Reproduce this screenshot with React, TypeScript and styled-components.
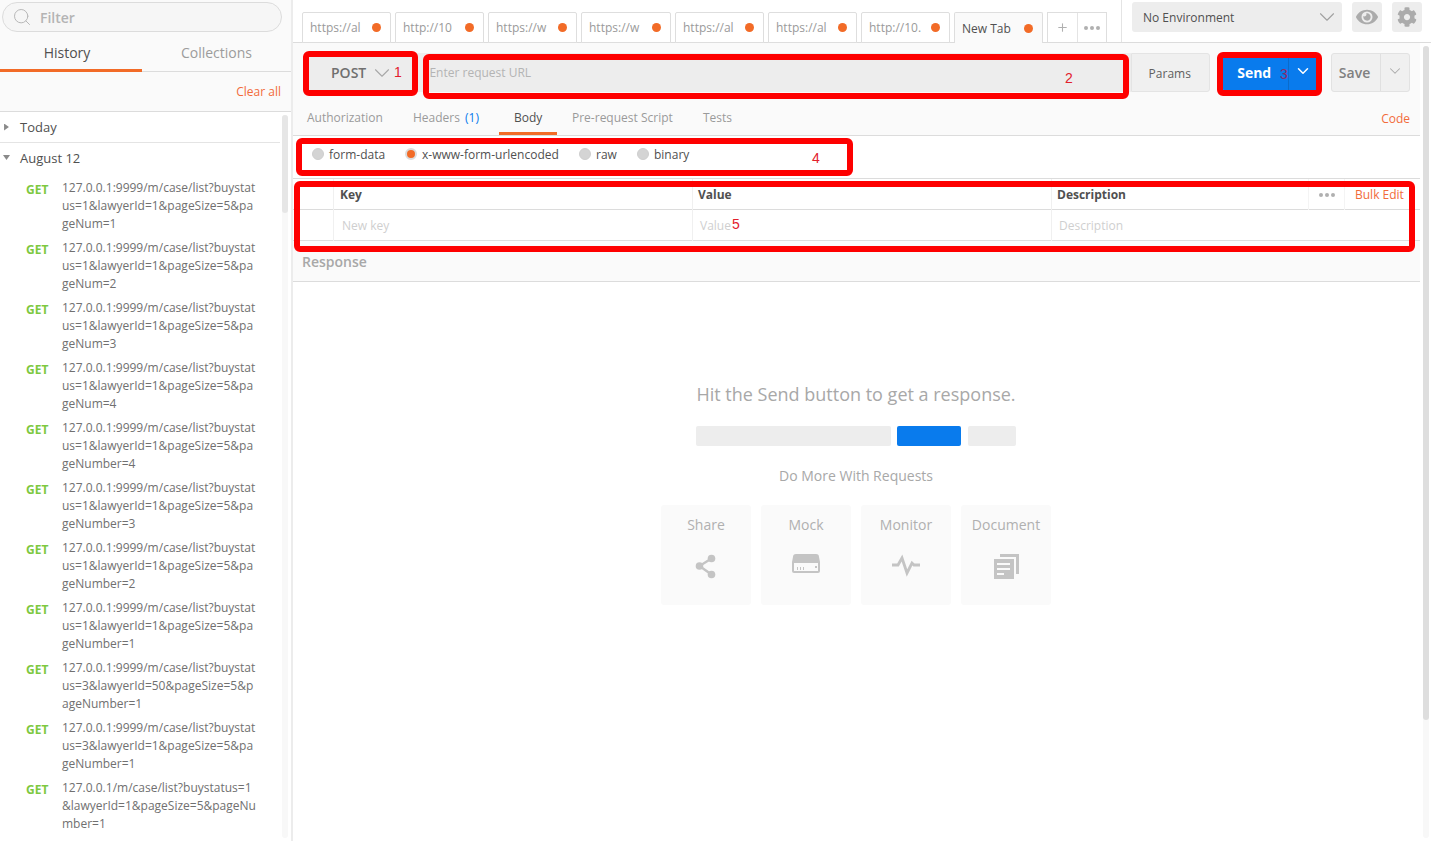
import React from "react";
import styled, { createGlobalStyle } from "styled-components";
import { ChevronDown, Search, Plus } from "lucide-react";
import { FaCog, FaEye } from "react-icons/fa";

const Global = createGlobalStyle`
  html, body { margin: 0; padding: 0; height: 841px; overflow: hidden; background: #fff; }
  body { font-family: "Open Sans", "Liberation Sans", sans-serif; -webkit-font-smoothing: antialiased; }
  * { box-sizing: border-box; }
`;

const Page = styled.div`
  position: relative;
  width: 1431px;
  height: 841px;
  display: flex;
  overflow: hidden;
`;

const Sidebar = styled.aside`
  width: 293px;
  height: 841px;
  flex: none;
  background: #fafafa;
  border-right: 2px solid #ececec;
  display: flex;
  flex-direction: column;
`;
const FilterWrap = styled.div`
  height: 42px;
  padding: 2px 9px 0 2px;
`;
const FilterBox = styled.div`
  height: 30px;
  border: 1px solid #dcdcdc;
  border-radius: 15px;
  background: #f6f6f6;
  display: flex;
  align-items: center;
  padding-left: 9px;
  gap: 8px;
  font-size: 14px;
  color: #b4b4b4;
  font-weight: 600;
`;
const SideTabs = styled.div`
  height: 30px;
  display: grid;
  grid-template-columns: 142px 142px;
  border-bottom: 1px solid #dcdcdc;
  width: 291px;
`;
const SideTab = styled.div<{ $active?: boolean }>`
  text-align: center;
  font-size: 14px;
  line-height: 22px;
  color: ${(p) => (p.$active ? "#505050" : "#9c9c9c")};
  height: 30px;
  padding: ${(p) => (p.$active ? "0 8px 0 0" : "0 0 0 7px")};
  border-bottom: 3px solid ${(p) => (p.$active ? "#f26b27" : "transparent")};
`;
const ClearRow = styled.div`
  height: 40px;
  border-bottom: 1px solid #dcdcdc;
  text-align: right;
  padding: 11px 10px 0 0;
  font-size: 12px;
  line-height: 18px;
  color: #f26b3a;
  width: 291px;
`;
const ListArea = styled.div`
  position: relative;
  flex: 1;
  background: #fff;
  overflow: hidden;
  padding-right: 11px;
`;
const SideTrack = styled.div`
  position: absolute;
  top: 3px;
  right: 3px;
  bottom: 3px;
  width: 6px;
  border-radius: 3px;
  background: #f8f8f8;
`;
const SideThumb = styled.div`
  height: 98px;
  border-radius: 3px;
  background: #e6e6e6;
`;
const GroupRow = styled.div<{ $line?: boolean }>`
  height: 31px;
  display: flex;
  align-items: center;
  padding: ${(p) => (p.$line ? "0 0 0 3px" : "0 0 2px 3px")};
  gap: 10px;
  font-size: 13px;
  color: #505050;
  border-bottom: ${(p) => (p.$line ? "1px solid #e4e4e4" : "none")};
`;
const Caret = styled.span<{ $open?: boolean }>`
  width: 7px;
  height: 7px;
  display: block;
  background: #8a8a8a;
  clip-path: ${(p) =>
    p.$open ? "polygon(0 15%, 100% 15%, 50% 85%)" : "polygon(15% 0, 85% 50%, 15% 100%)"};
`;
const HistoryItem = styled.div`
  height: 60px;
  display: flex;
  padding: 0 0 0 26px;
`;
const Method = styled.div`
  width: 36px;
  flex: none;
  font-size: 12px;
  font-weight: 700;
  line-height: 22px;
  color: #7dc83f;
`;
const ItemUrl = styled.div`
  font-size: 12px;
  line-height: 18px;
  color: #707070;
  white-space: pre;
`;
const ItemList = styled.div`
  padding-top: 5px;
`;

const Main = styled.main`
  flex: 1;
  min-width: 0;
  display: flex;
  flex-direction: column;
`;
const TopBar = styled.div`
  height: 43px;
  display: flex;
  border-bottom: 1px solid #dcdcdc;
  padding-left: 9px;
`;
const TabStrip = styled.div`
  display: flex;
  align-items: flex-end;
  gap: 4px;
  width: 820px;
  border-right: 1px solid #e4e4e4;
`;
const Tab = styled.div<{ $w: number; $active?: boolean }>`
  width: ${(p) => p.$w}px;
  height: 31px;
  border: 1px solid #dedede;
  border-bottom: ${(p) => (p.$active ? "none" : "1px solid #dedede")};
  background: ${(p) => (p.$active ? "#fafafa" : "#fff")};
  border-radius: 2px 2px 0 0;
  display: flex;
  align-items: center;
  justify-content: space-between;
  padding: 0 9px 0 7px;
  font-size: 12px;
  color: ${(p) => (p.$active ? "#505050" : "#9a9a9a")};
  margin-bottom: -1px;
  position: relative;
  z-index: 1;
`;
const TabText = styled.span`
  width: 54px;
  white-space: nowrap;
`;
const Dot = styled.span`
  width: 9px;
  height: 9px;
  border-radius: 50%;
  background: #f26b27;
  flex: none;
`;
const TabTools = styled.div`
  display: flex;
  width: 60px;
  height: 31px;
  border: 1px solid #dedede;
  border-bottom-color: #dcdcdc;
  margin-bottom: -1px;
  position: relative;
  z-index: 1;
`;
const ToolCell = styled.div<{ $sep?: boolean }>`
  flex: 1;
  display: flex;
  align-items: center;
  justify-content: center;
  border-right: ${(p) => (p.$sep ? "1px solid #e4e4e4" : "none")};
  color: #b0b0b0;
`;
const Dots = styled.span`
  display: flex;
  gap: 2px;
  i {
    width: 4px;
    height: 4px;
    border-radius: 50%;
    background: #b0b0b0;
    display: block;
  }
`;
const EnvArea = styled.div`
  display: flex;
  gap: 10px;
  padding: 2px 0 0 10px;
`;
const EnvSelect = styled.div`
  width: 210px;
  height: 30px;
  border-radius: 3px;
  background: #ededed;
  color: #505050;
  font-size: 12px;
  display: flex;
  align-items: center;
  justify-content: space-between;
  padding: 0 2px 0 11px;
`;
const IconBtn = styled.div`
  width: 30px;
  height: 30px;
  border-radius: 3px;
  background: #ededed;
  color: #ababab;
  display: flex;
  align-items: center;
  justify-content: center;
`;

const Content = styled.div`
  flex: 1;
  display: flex;
  min-height: 0;
  background: #fff;
`;
const Work = styled.div`
  width: 1127px;
  flex: none;
  display: flex;
  flex-direction: column;
`;
const ScrollCol = styled.div`
  flex: 1;
  padding: 3px 2px 0 3px;
  background: #fff;
`;
const ScrollRail = styled.div`
  width: 6px;
  height: 792px;
  border-radius: 3px;
  background: #f8f8f8;
`;
const ScrollThumb = styled.div`
  height: 674px;
  border-radius: 3px;
  background: #dedede;
`;
const Upper = styled.div`
  background: #fafafa;
  border-bottom: 1px solid #dcdcdc;
`;
const UrlRow = styled.div`
  height: 49px;
  padding: 10px 10px 0 13px;
  display: flex;
  align-items: flex-start;
`;
const MethodBox = styled.div`
  width: 107px;
  height: 39px;
  background: #ededed;
  border-radius: 3px 0 0 3px;
  font-size: 14px;
  font-weight: 600;
  color: #707070;
  display: flex;
  align-items: center;
  gap: 3px;
  padding-left: 25px;
`;
const UrlInput = styled.div`
  width: 722px;
  height: 39px;
  margin-left: 1px;
  background: #ededed;
  font-size: 12px;
  color: #b4b4b4;
  padding: 11px 0 0 16px;
  line-height: 18px;
`;
const ParamsBtn = styled.div`
  width: 80px;
  height: 39px;
  border: 1px solid #e4e4e4;
  border-radius: 0 3px 3px 0;
  background: #f0f0f0;
  color: #606060;
  font-size: 12px;
  line-height: 39px;
  padding-left: 17px;
`;
const SendBtn = styled.div`
  margin-left: 13px;
  width: 95px;
  height: 39px;
  background: #097bed;
  border-radius: 3px;
  color: #fff;
  font-size: 14px;
  font-weight: 700;
  display: flex;
`;
const SendLabel = styled.div`
  width: 66px;
  padding-left: 14px;
  line-height: 39px;
  border-right: 1px solid #0a6bcb;
`;
const SendCaret = styled.div`
  flex: 1;
  display: flex;
  align-items: center;
  justify-content: center;
  padding-bottom: 3px;
`;
const SaveBtn = styled.div`
  margin-left: 13px;
  width: 80px;
  height: 39px;
  border: 1px solid #e2e2e2;
  border-radius: 3px;
  background: #f0f0f0;
  color: #808080;
  font-size: 14px;
  font-weight: 600;
  display: flex;
`;
const SaveLabel = styled.div`
  width: 49px;
  text-align: center;
  line-height: 37px;
  padding-right: 2px;
  border-right: 1px solid #e0e0e0;
`;
const SaveCaret = styled.div`
  flex: 1;
  display: flex;
  align-items: center;
  justify-content: center;
  padding-bottom: 3px;
  color: #aaa;
`;
const ReqTabs = styled.div`
  height: 43px;
  position: relative;
  display: flex;
  align-items: flex-start;
  padding-left: 14px;
  font-size: 12px;
  color: #9a9a9a;
`;
const ReqTab = styled.div<{ $w: number; $active?: boolean }>`
  width: ${(p) => p.$w}px;
  height: 43px;
  padding-top: 17px;
  line-height: 18px;
  color: ${(p) => (p.$active ? "#505050" : "#9a9a9a")};
  b {
    font-weight: 400;
    color: #097bed;
    margin-left: 2px;
  }
`;
const BodyTabInner = styled.span`
  display: inline-block;
  height: 26px;
  padding: 0 15px;
  margin-left: -15px;
  border-bottom: 3px solid #f26b27;
`;
const CodeLink = styled.div`
  margin-left: auto;
  padding: 18px 10px 0 0;
  line-height: 18px;
  color: #f26b3a;
`;
const BodyTypes = styled.div`
  height: 43px;
  background: #fff;
  border-bottom: 1px solid #dcdcdc;
  display: flex;
  padding: 10px 0 0 19px;
  font-size: 12px;
  line-height: 18px;
  color: #505050;
`;
const RadioLabel = styled.label<{ $w: number }>`
  width: ${(p) => p.$w}px;
  display: flex;
  gap: 5px;
  align-items: flex-start;
`;
const Radio = styled.span<{ $on?: boolean }>`
  width: 12px;
  height: 12px;
  margin-top: 2px;
  border-radius: 50%;
  background: ${(p) => (p.$on ? "#f26b27" : "#d4d4d4")};
  border: ${(p) => (p.$on ? "2.5px solid #dcdcdc" : "1px solid #cfcfcf")};
  flex: none;
`;
const TableRow = styled.div<{ $head?: boolean }>`
  display: grid;
  grid-template-columns: 40px 359px 359px 1fr;
  height: 31px;
  background: #fff;
  border-bottom: 1px solid #dcdcdc;
  font-size: 12px;
  line-height: 32px;
  font-weight: ${(p) => (p.$head ? 700 : 400)};
  color: ${(p) => (p.$head ? "#505050" : "#cfcfcf")};
`;
const Cell = styled.div<{ $pad?: number }>`
  border-left: 1px solid #f0f0f0;
  padding-left: ${(p) => p.$pad ?? 7}px;
`;
const GutterCell = styled.div``;
const DescCell = styled.div`
  border-left: 1px solid #f0f0f0;
  padding-left: 5px;
  display: flex;
`;
const DescMore = styled.div`
  margin-left: auto;
  width: 37px;
  display: flex;
  align-items: center;
  justify-content: center;
  border-left: 1px solid #f4f4f4;
  border-right: 1px solid #f4f4f4;
`;
const BulkEdit = styled.div`
  width: 75px;
  padding-left: 10px;
  font-weight: 400;
  color: #f26b3a;
`;
const ResponseHead = styled.div`
  height: 41px;
  background: #fafafa;
  border-bottom: 1px solid #dcdcdc;
  padding: 11px 0 0 9px;
  font-size: 14px;
  line-height: 20px;
  font-weight: 600;
  color: #a8a8a8;
`;
const Empty = styled.div`
  flex: 1;
  background: #fff;
  display: flex;
  flex-direction: column;
  align-items: center;
  padding: 99px 0 0 0;
  width: 1126px;
`;
const EmptyTitle = styled.div`
  font-size: 18px;
  line-height: 26px;
  color: #a8a8a8;
  font-weight: 400;
`;
const FakeBar = styled.div`
  margin-top: 19px;
  display: flex;
  gap: 6px;
`;
const FakePart = styled.div<{ $w: number; $blue?: boolean }>`
  width: ${(p) => p.$w}px;
  height: 20px;
  border-radius: 2px;
  background: ${(p) => (p.$blue ? "#097bed" : "#ededed")};
  &:last-child {
    margin-left: 1px;
  }
`;
const MoreTitle = styled.div`
  margin-top: 20px;
  font-size: 14px;
  line-height: 20px;
  font-weight: 400;
  color: #a8a8a8;
`;
const Cards = styled.div`
  margin-top: 19px;
  display: flex;
  gap: 10px;
`;
const Card = styled.div`
  width: 90px;
  height: 100px;
  background: #fafafa;
  border-radius: 3px;
  display: flex;
  flex-direction: column;
  align-items: center;
  padding-top: 10px;
  gap: 15px;
  font-size: 14px;
  line-height: 20px;
  color: #b0b0b0;
`;
const CardIcon = styled.svg`
  width: 32px;
  height: 32px;
  fill: #c4c4c4;
`;

const Mark = styled.div<{ $l: number; $t: number; $w: number; $h: number }>`
  position: absolute;
  left: ${(p) => p.$l}px;
  top: ${(p) => p.$t}px;
  width: ${(p) => p.$w}px;
  height: ${(p) => p.$h}px;
  border: 6px solid #fe0000;
  border-radius: 6px;
  pointer-events: none;
  z-index: 5;
`;
const MarkNum = styled.div<{ $l: number; $t: number; $dark?: boolean }>`
  position: absolute;
  left: ${(p) => p.$l}px;
  top: ${(p) => p.$t}px;
  font-size: 14px;
  line-height: 16px;
  color: ${(p) => (p.$dark ? "#8a2a6a" : "#e2202c")};
  z-index: 6;
  font-family: "Liberation Sans", sans-serif;
`;

const tabs: [string, number][] = [
  ["https://al", 89],
  ["http://10", 89],
  ["https://w", 89],
  ["https://w", 90],
  ["https://al", 89],
  ["https://al", 89],
  ["http://10.", 89],
];

const items = [
  "127.0.0.1:9999/m/case/list?buystat\nus=1&lawyerId=1&pageSize=5&pa\ngeNum=1",
  "127.0.0.1:9999/m/case/list?buystat\nus=1&lawyerId=1&pageSize=5&pa\ngeNum=2",
  "127.0.0.1:9999/m/case/list?buystat\nus=1&lawyerId=1&pageSize=5&pa\ngeNum=3",
  "127.0.0.1:9999/m/case/list?buystat\nus=1&lawyerId=1&pageSize=5&pa\ngeNum=4",
  "127.0.0.1:9999/m/case/list?buystat\nus=1&lawyerId=1&pageSize=5&pa\ngeNumber=4",
  "127.0.0.1:9999/m/case/list?buystat\nus=1&lawyerId=1&pageSize=5&pa\ngeNumber=3",
  "127.0.0.1:9999/m/case/list?buystat\nus=1&lawyerId=1&pageSize=5&pa\ngeNumber=2",
  "127.0.0.1:9999/m/case/list?buystat\nus=1&lawyerId=1&pageSize=5&pa\ngeNumber=1",
  "127.0.0.1:9999/m/case/list?buystat\nus=3&lawyerId=50&pageSize=5&p\nageNumber=1",
  "127.0.0.1:9999/m/case/list?buystat\nus=3&lawyerId=1&pageSize=5&pa\ngeNumber=1",
  "127.0.0.1/m/case/list?buystatus=1\n&lawyerId=1&pageSize=5&pageNu\nmber=1",
];

const ShareIcon = () => (
  <CardIcon viewBox="0 0 32 32">
    <circle cx="21.5" cy="8.5" r="3.8" />
    <circle cx="9.5" cy="16" r="3.8" />
    <circle cx="21.5" cy="24.5" r="3.8" />
    <path d="M9.5 16 21.5 8.5M9.5 16 21.5 24.5" stroke="#c4c4c4" strokeWidth="2.4" />
  </CardIcon>
);
const MockIcon = () => (
  <CardIcon viewBox="0 0 32 32">
    <path
      fillRule="evenodd"
      d="M6 4h20a3 3 0 0 1 3 3l1 5v9a2 2 0 0 1-2 2H4a2 2 0 0 1-2-2v-9l1-5a3 3 0 0 1 3-3ZM4 13v8h24v-8H4Zm3 4h1v3H7Zm3 0h1v3h-1Zm3 0h1v3h-1Zm12-1h2v2h-2Z"
    />
  </CardIcon>
);
const MonitorIcon = () => (
  <CardIcon viewBox="0 0 32 32">
    <path
      d="M2 15h6l4-7 5 15 5-10 2 2h6"
      fill="none"
      stroke="#c4c4c4"
      strokeWidth="2.8"
    />
  </CardIcon>
);
const DocumentIcon = () => (
  <CardIcon viewBox="0 0 32 32">
    <path d="M10 4h19v20h-3V7H10Z" />
    <path
      fillRule="evenodd"
      d="M4 9h20v20H4Zm3 4v2h13v-2Zm0 5v2h13v-2Zm0 5v2h7v-2Z"
    />
  </CardIcon>
);

export default function App() {
  return (
    <Page>
      <Global />
      <Sidebar>
        <FilterWrap>
          <FilterBox>
            <Search size={20} strokeWidth={1.2} color="#b8b8b8" />
            Filter
          </FilterBox>
        </FilterWrap>
        <SideTabs>
          <SideTab $active>History</SideTab>
          <SideTab>Collections</SideTab>
        </SideTabs>
        <ClearRow>Clear all</ClearRow>
        <ListArea>
          <SideTrack>
            <SideThumb />
          </SideTrack>
          <GroupRow $line>
            <Caret />
            Today
          </GroupRow>
          <GroupRow>
            <Caret $open />
            August 12
          </GroupRow>
          <ItemList>
            {items.map((u, i) => (
              <HistoryItem key={i}>
                <Method>GET</Method>
                <ItemUrl>{u}</ItemUrl>
              </HistoryItem>
            ))}
          </ItemList>
        </ListArea>
      </Sidebar>
      <Main>
        <TopBar>
          <TabStrip>
            {tabs.map(([t, w], i) => (
              <Tab key={i} $w={w}>
                <TabText>{t}</TabText>
                <Dot />
              </Tab>
            ))}
            <Tab $w={89} $active>
              New Tab
              <Dot />
            </Tab>
            <TabTools>
              <ToolCell $sep>
                <Plus size={13} strokeWidth={2} />
              </ToolCell>
              <ToolCell>
                <Dots>
                  <i />
                  <i />
                  <i />
                </Dots>
              </ToolCell>
            </TabTools>
          </TabStrip>
          <EnvArea>
            <EnvSelect>
              No Environment
              <ChevronDown size={26} strokeWidth={1} color="#a0a0a0" />
            </EnvSelect>
            <IconBtn>
              <FaEye size={22} />
            </IconBtn>
            <IconBtn>
              <FaCog size={20} />
            </IconBtn>
          </EnvArea>
        </TopBar>
        <Content>
          <Work>
            <Upper>
              <UrlRow>
                <MethodBox>
                  POST
                  <ChevronDown size={26} strokeWidth={1} color="#a8a8a8" />
                </MethodBox>
                <UrlInput>Enter request URL</UrlInput>
                <ParamsBtn>Params</ParamsBtn>
                <SendBtn>
                  <SendLabel>Send</SendLabel>
                  <SendCaret>
                    <ChevronDown size={18} strokeWidth={2} />
                  </SendCaret>
                </SendBtn>
                <SaveBtn>
                  <SaveLabel>Save</SaveLabel>
                  <SaveCaret>
                    <ChevronDown size={18} strokeWidth={1.4} />
                  </SaveCaret>
                </SaveBtn>
              </UrlRow>
              <ReqTabs>
                <ReqTab $w={106}>Authorization</ReqTab>
                <ReqTab $w={101}>
                  Headers <b>(1)</b>
                </ReqTab>
                <ReqTab $w={58} $active>
                  <BodyTabInner>Body</BodyTabInner>
                </ReqTab>
                <ReqTab $w={131}>Pre-request Script</ReqTab>
                <ReqTab $w={50}>Tests</ReqTab>
                <CodeLink>Code</CodeLink>
              </ReqTabs>
            </Upper>
            <BodyTypes>
              <RadioLabel $w={93}>
                <Radio />
                form-data
              </RadioLabel>
              <RadioLabel $w={174}>
                <Radio $on />
                x-www-form-urlencoded
              </RadioLabel>
              <RadioLabel $w={58}>
                <Radio />
                raw
              </RadioLabel>
              <RadioLabel $w={80}>
                <Radio />
                binary
              </RadioLabel>
            </BodyTypes>
            <TableRow $head>
              <GutterCell />
              <Cell $pad={6}>Key</Cell>
              <Cell $pad={5}>Value</Cell>
              <DescCell>
                Description
                <DescMore>
                  <Dots>
                    <i />
                    <i />
                    <i />
                  </Dots>
                </DescMore>
                <BulkEdit>Bulk Edit</BulkEdit>
              </DescCell>
            </TableRow>
            <TableRow>
              <GutterCell />
              <Cell $pad={8}>New key</Cell>
              <Cell $pad={7}>Value</Cell>
              <Cell $pad={7}>Description</Cell>
            </TableRow>
            <ResponseHead>Response</ResponseHead>
            <Empty>
              <EmptyTitle>Hit the Send button to get a response.</EmptyTitle>
              <FakeBar>
                <FakePart $w={195} />
                <FakePart $w={64} $blue />
                <FakePart $w={48} />
              </FakeBar>
              <MoreTitle>Do More With Requests</MoreTitle>
              <Cards>
                <Card>
                  Share
                  <ShareIcon />
                </Card>
                <Card>
                  Mock
                  <MockIcon />
                </Card>
                <Card>
                  Monitor
                  <MonitorIcon />
                </Card>
                <Card>
                  Document
                  <DocumentIcon />
                </Card>
              </Cards>
            </Empty>
          </Work>
          <ScrollCol>
            <ScrollRail>
              <ScrollThumb />
            </ScrollRail>
          </ScrollCol>
        </Content>
      </Main>
      <Mark $l={303} $t={51} $w={115} $h={45} />
      <Mark $l={423} $t={54} $w={706} $h={45} />
      <Mark $l={1217} $t={52} $w={105} $h={44} />
      <Mark $l={296} $t={138} $w={557} $h={38} />
      <Mark $l={294} $t={181} $w={1121} $h={71} />
      <MarkNum $l={394} $t={64}>1</MarkNum>
      <MarkNum $l={1065} $t={70}>2</MarkNum>
      <MarkNum $l={1280} $t={66} $dark>3</MarkNum>
      <MarkNum $l={812} $t={150}>4</MarkNum>
      <MarkNum $l={732} $t={216}>5</MarkNum>
    </Page>
  );
}
